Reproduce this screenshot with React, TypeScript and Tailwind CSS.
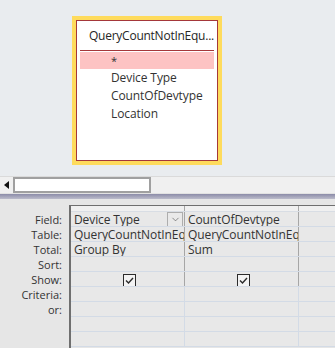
import { ChevronDown } from "lucide-react";

const rows = ["Field:", "Table:", "Total:", "Sort:", "Show:", "Criteria:", "or:", "", ""];

const col1 = ["Device Type", "QueryCountNotInEqu", "Group By", "", "check", "", "", "", ""];
const col2 = ["CountOfDevtype", "QueryCountNotInEqu", "Sum", "", "check", "", "", "", ""];

function Box() {
  return (
    <div className="w-[150px] h-[149px] border-4 border-[#fedb5c]">
      <div className="h-full border border-[#a4373a] bg-white px-[3px] flex flex-col">
        <div className="h-[29px] flex items-center pl-[9px] text-[12px] tracking-[-0.25px] text-[#262626] whitespace-nowrap overflow-hidden">
          QueryCountNotInEqu...
        </div>
        <div className="h-px bg-[#a4373a]" />
        <div className="mt-px h-[17px] bg-[#fdc3c3] pl-[31px] text-[11px] text-[#333] leading-[17px]">*</div>
        {["Device Type", "CountOfDevtype", "Location"].map((t) => (
          <div key={t} className="h-[18px] pl-[31px] text-[12px] tracking-[-0.1px] text-[#333] leading-[18px]">
            {t}
          </div>
        ))}
      </div>
    </div>
  );
}

function Cell({ value, dropdown }: { value: string; dropdown?: boolean }) {
  return (
    <div className="relative w-[114px] h-full border-r border-[#a6a6a6] flex items-center pl-[3px] overflow-hidden whitespace-nowrap leading-[15px]">
      {value === "check" ? (
        <div className="mx-auto mt-[2px] w-[13px] h-[13px] border border-[#2b2b2b] bg-[#f3f3f3] flex items-center justify-center">
          <svg width="11" height="11" viewBox="0 0 11 11">
            <path d="M2 5.5 L4.5 8 L9 3" fill="none" stroke="#2b2b2b" strokeWidth="1.4" />
          </svg>
        </div>
      ) : (
        value
      )}
      {dropdown && (
        <div className="absolute right-px top-0 w-[16px] h-[15px] border border-[#adadad] bg-[#e9e9e9] flex items-center justify-center">
          <ChevronDown size={11} strokeWidth={1.4} className="text-[#555]" />
        </div>
      )}
    </div>
  );
}

export default function App() {
  return (
    <div className="w-[335px] h-[348px] overflow-hidden flex flex-col font-['Open_Sans',sans-serif] text-[#333]">
      <div className="h-[176px] bg-[#e9ecef] pt-[16px] pl-[72px]">
        <Box />
      </div>
      <div className="h-[17px] bg-[#f0f0f0] border-t border-[#dadada] flex items-center">
        <div className="w-[13px] flex justify-center">
          <svg width="5" height="8" viewBox="0 0 5 8">
            <path d="M5 0 L0 4 L5 8 Z" fill="#111" />
          </svg>
        </div>
        <div className="w-[138px] h-[16px] border-2 border-[#a0a0a0] bg-white" />
      </div>
      <div className="h-px bg-[#e2e2e2]" />
      <div className="h-[5px] bg-gradient-to-b from-[#8c8ca8] to-[#bcbccb]" />
      <div className="flex-1 bg-[#e6e6e6] pt-[6px] flex">
        <div className="w-[69px] pt-[7px] flex flex-col text-[11px]">
          {rows.map((r, i) => (
            <div key={i} className="h-[15px] text-right pr-[7px] leading-[15px]">
              {r}
            </div>
          ))}
        </div>
        <div className="flex-1 border-l-2 border-t border-[#6f6f6f] flex flex-col text-[12px] tracking-[-0.1px]">
          <div className="h-[6px] bg-[#f0f0f0] border-b border-[#d8dde4] flex">
            <div className="w-[114px] border-r border-[#a6a6a6]" />
            <div className="w-[114px] border-r border-[#a6a6a6]" />
          </div>
          {rows.map((r, i) => (
            <div key={i} className="h-[15px] border-b border-[#d3dbe6] flex bg-[#e8e8e8]">
              {i < 5 ? (
                <>
                  <Cell value={col1[i]} dropdown={i === 0} />
                  <Cell value={col2[i]} />
                </>
              ) : (
                <>
                  <div className="w-[114px] h-full border-r border-[#d3dbe6]" />
                  <div className="w-[114px] h-full border-r border-[#d3dbe6]" />
                </>
              )}
            </div>
          ))}
        </div>
      </div>
    </div>
  );
}
